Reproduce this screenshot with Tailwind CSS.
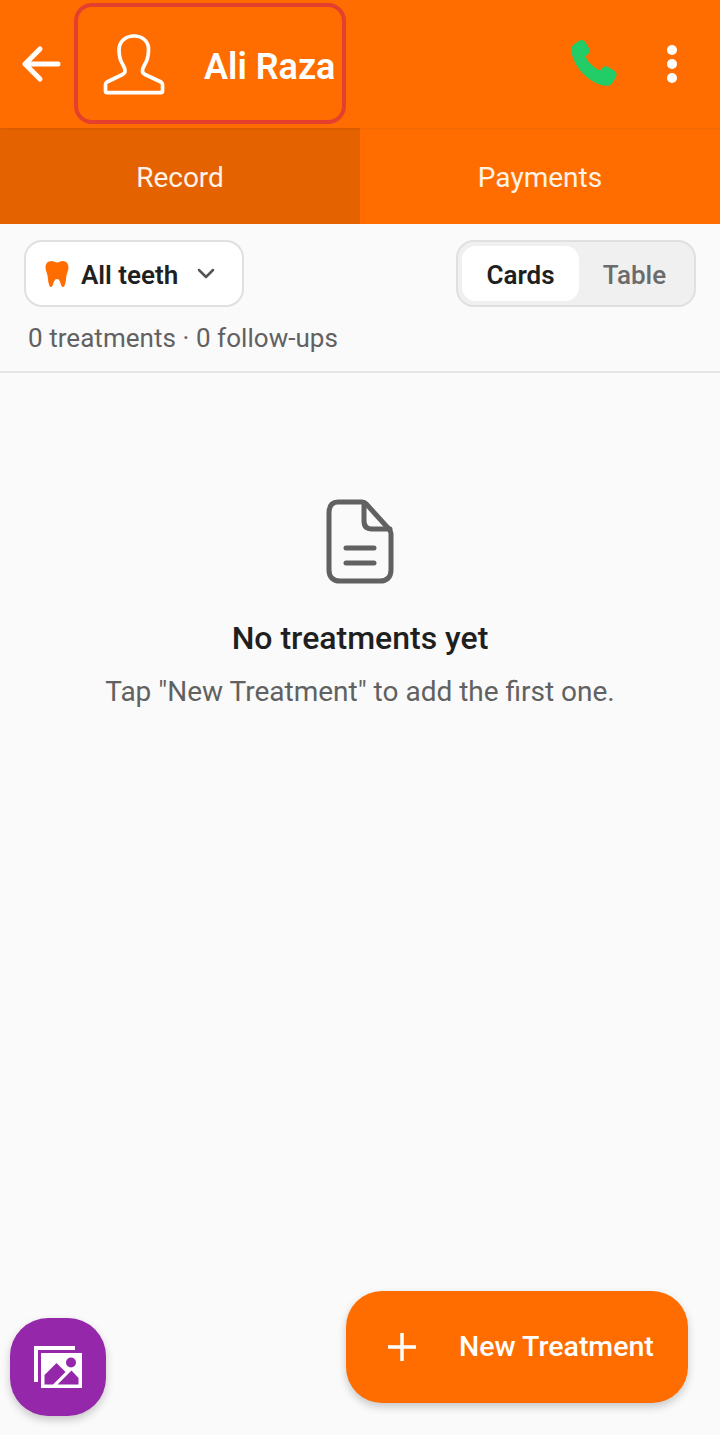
<!DOCTYPE html>
<html>
<head>
<meta charset="utf-8">
<script src="https://cdn.jsdelivr.net/npm/@tailwindcss/browser@4"></script>
</head>
<body class="m-0">
<div class="relative w-[720px] h-[1435px] overflow-hidden bg-[#fafafa] font-['Roboto',sans-serif] flex flex-col">
  <header class="h-[128px] bg-[#ff6d00] flex items-center relative shadow-[0_1px_2px_rgba(0,0,0,0.08)] z-10">
    <button class="w-[74px] h-full flex items-center justify-center shrink-0">
      <svg width="44" height="44" viewBox="0 0 44 44" fill="none" stroke="#fff" stroke-width="5" stroke-linecap="round" stroke-linejoin="round" class="ml-[10px]"><path d="M38 22H5M20 7 5 22l15 15"/></svg>
    </button>
    <div class="w-[272px] h-[121px] -mt-[1px] border-[4px] border-[#e53f2f] rounded-[18px] flex items-center shrink-0">
      <svg width="62" height="62" viewBox="0 0 62 62" fill="none" stroke="#fff" stroke-width="3.700" stroke-linejoin="round" class="ml-[25px] shrink-0"><path d="M31 3c-9 0-15 6-15 14 0 6 1.500 11 4 15 1.500 2.500 2 4 2 6 0 1.500-.7 2.500-2.500 3.500L4 49c-1 .6-1.500 1.300-1.500 2.500V58c0 1 .7 1.700 1.700 1.700h53.600c1 0 1.700-.7 1.700-1.700v-6.500c0-1.200-.5-1.900-1.500-2.500l-16-7.500c-1.800-1-2.500-2-2.500-3.500 0-2 .5-3.500 2-6 2.500-4 4-9 4-15C46 9 40 3 31 3Z"/></svg>
      <span class="ml-[39px] pt-[6px] text-[36px] leading-none font-semibold text-white whitespace-nowrap">Ali Raza</span>
    </div>
    <div class="ml-auto flex items-center">
      <svg width="50" height="50" viewBox="0 0 50 50" class="mr-[50px]"><path d="M6 5.500 11 2c2.500-1.500 4.500-1 5.800 1l3.200 5.500c1.100 2 .8 3.800-.9 5.200l-3.100 2.400c1.800 3.600 3.900 6.600 6.500 9.200 2.900 2.800 6.200 5 9.800 6.600l2.400-3c1.400-1.700 3.300-2 5.200-.9l5.500 3.200c2.300 1.400 2.800 3.600 1.400 6l-2.800 4.700c-1.300 2-3.200 3-5.700 2.900-7.400-.7-14.800-4.500-21.500-10.800C10.200 27.500 6 20 4.400 12c-.5-2.700 0-4.900 1.600-6.500Z" fill="#22cc66" stroke="#22cc66" stroke-width="2" stroke-linejoin="round" transform="translate(1 1)"/></svg>
      <div class="w-[10px] flex flex-col gap-[4px] mr-[43px]">
        <span class="w-[10px] h-[10px] rounded-full bg-white"></span>
        <span class="w-[10px] h-[10px] rounded-full bg-white"></span>
        <span class="w-[10px] h-[10px] rounded-full bg-white"></span>
      </div>
    </div>
  </header>
  <nav class="h-[96px] flex text-[28px] text-[#fff3e8] shrink-0">
    <div class="w-1/2 bg-[#e56200] flex items-center justify-center pt-[4px]">Record</div>
    <div class="w-1/2 bg-[#ff6d00] flex items-center justify-center pt-[4px]">Payments</div>
  </nav>
  <section class="h-[149px] border-b-2 border-[#e4e4e4] px-[24px] pt-[16px] shrink-0">
    <div class="flex justify-between items-start">
      <div class="w-[220px] h-[67px] bg-white border-2 border-[#e0e0e0] rounded-[18px] flex items-center pl-[20px]">
        <svg width="24" height="28" viewBox="0 0 24 28" fill="#ff6d00" class="-ml-[1px]"><path d="M6.500 1C2.800 1 .5 3.800.5 7.500c0 3 1.500 5 2 8 .5 3.500 1 11.500 3.500 11.500 2.700 0 2-8 6-8s3.300 8 6 8c2.500 0 3-8 3.500-11.500.5-3 2-5 2-8C23.500 3.800 21.200 1 17.500 1 15.500 1 14 2.500 12 2.500S8.500 1 6.500 1Z"/></svg>
        <span class="ml-[12px] pt-[2px] text-[26px] leading-none font-semibold text-[#1f1f1f]">All teeth</span>
        <svg width="20" height="12" viewBox="0 0 20 12" fill="none" stroke="#555" stroke-width="2.500" stroke-linecap="round" stroke-linejoin="round" class="ml-[18px]"><path d="m3 2 7 7 7-7"/></svg>
      </div>
      <div class="w-[240px] h-[67px] bg-[#f0f0f0] border-2 border-[#e0e0e0] rounded-[18px] p-[4px] flex text-[26px] font-semibold">
        <div class="w-[117px] bg-white rounded-[14px] flex items-center justify-center pt-[4px] text-[#1f1f1f]">Cards</div>
        <div class="flex-1 flex items-center justify-center pt-[4px] font-medium text-[#6b6b6b]">Table</div>
      </div>
    </div>
    <p class="mt-[15px] ml-[4px] text-[26px] leading-[32px] tracking-[0.05px] text-[#616161]">0 treatments · 0 follow-ups</p>
  </section>
  <main class="flex-1 flex flex-col items-center pt-[126px]">
    <svg width="68" height="86" viewBox="0 0 68 86" fill="none" stroke="#616161" stroke-width="5" stroke-linecap="round" stroke-linejoin="round"><path d="M12 3h24c2 0 3 .6 4.300 2L62 29c1.500 1.700 3 3 3 5.500V71c0 7-4 11-11 11H14C7 82 3 78 3 71V14C3 7 6 3 12 3Z"/><path d="M38 4v18c0 5 2.500 8 8 8h18"/><path d="M20 49h28M20 64h28"/></svg>
    <h2 class="mt-[33px] text-[32px] leading-[40px] font-medium text-[#1f1f1f]">No treatments yet</h2>
    <p class="mt-[17px] text-[28px] leading-[34px] text-[#616161]">Tap "New Treatment" to add the first one.</p>
  </main>
  <button class="absolute left-[10px] top-[1318px] w-[96px] h-[98px] rounded-[38px] bg-[#9527ab] flex items-center justify-center shadow-[0_4px_8px_rgba(0,0,0,0.2)]">
    <svg width="50" height="44" viewBox="0 0 50 44" fill="#fff"><path d="M1 1h41v4H5v32H1Z"/><path fill-rule="evenodd" d="M8 8h41v35H8ZM38 12.500a5 5 0 1 0 0 10 5 5 0 0 0 0-10ZM11.500 39.500h8.500L32.500 27l-9-9-12 12ZM24.500 39.500h21V33l-7-7.500Z"/></svg>
  </button>
  <button class="absolute left-[346px] top-[1291px] w-[342px] h-[112px] rounded-[36px] bg-[#ff6d00] flex items-center text-white shadow-[0_4px_8px_rgba(0,0,0,0.2)]">
    <svg width="28" height="28" viewBox="0 0 28 28" fill="none" stroke="#fff" stroke-width="3.500" class="ml-[42px]"><path d="M14 0v28M0 14h28"/></svg>
    <span class="ml-[43px] text-[28.500px] leading-none font-medium whitespace-nowrap">New Treatment</span>
  </button>
</div>
</body>
</html>
